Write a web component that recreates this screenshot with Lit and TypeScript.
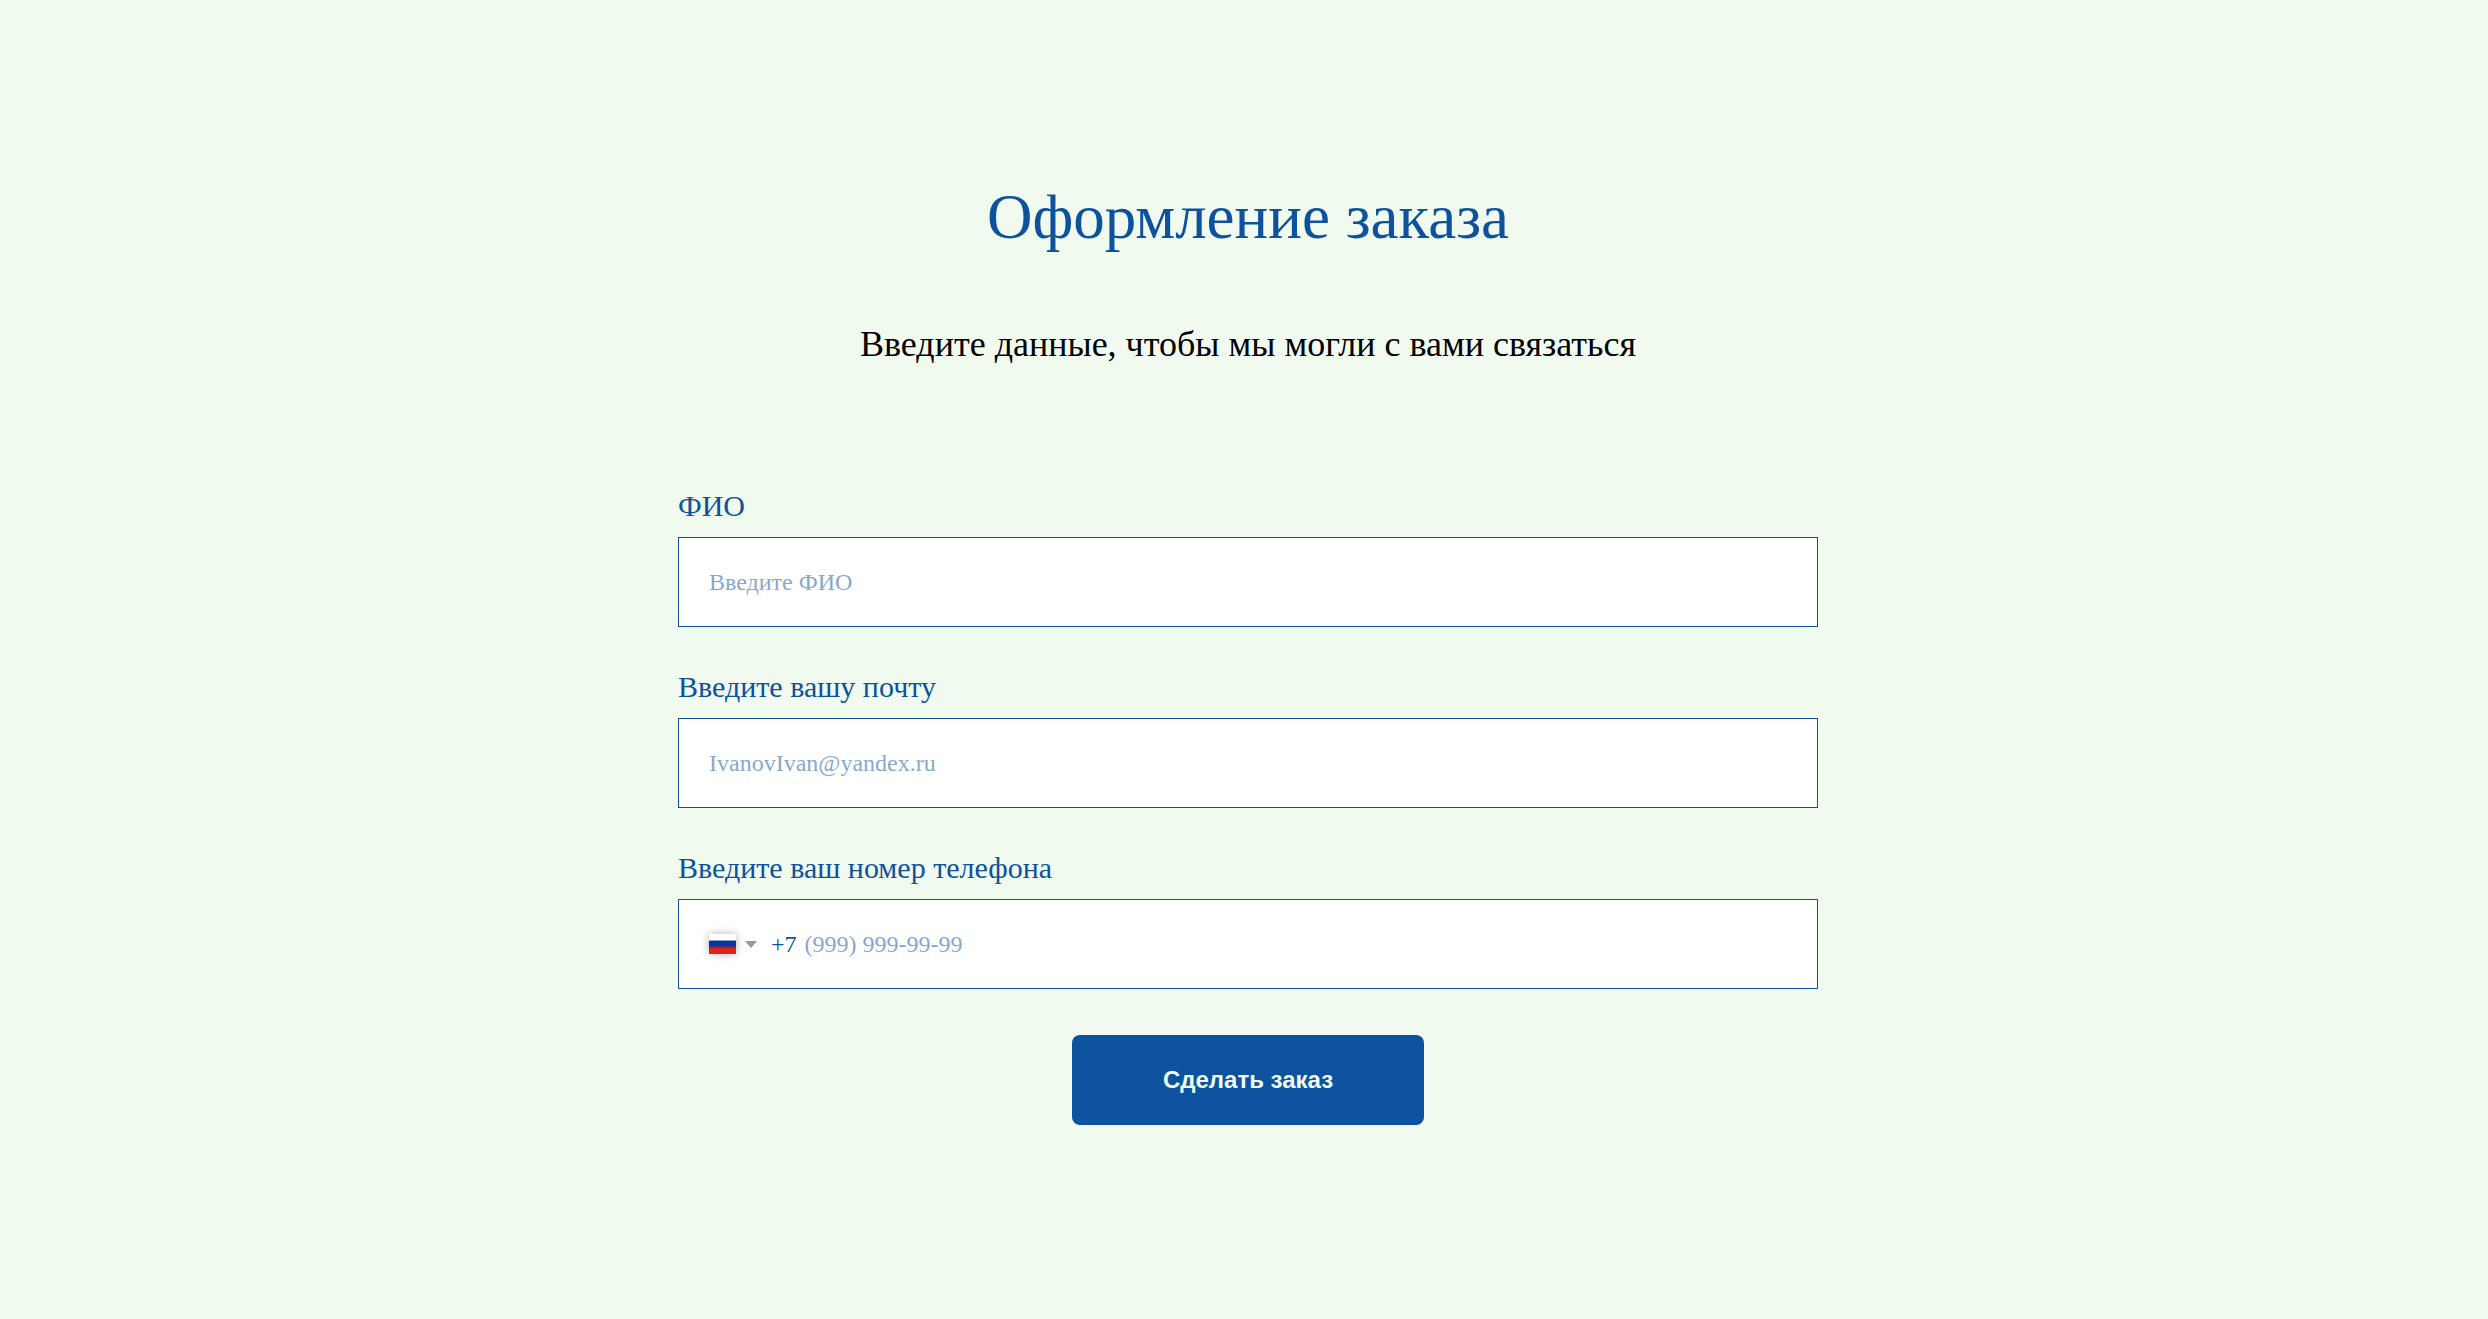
import { LitElement, html, css, svg } from "lit";
import { customElement } from "lit/decorators.js";

const flag = svg`
  <rect width="27" height="20" fill="#ffffff"/>
  <rect y="6" width="27" height="2" fill="#8aa0d8"/>
  <rect y="7" width="27" height="6" fill="#0036a7"/>
  <rect y="12" width="27" height="2" fill="#6b2c63"/>
  <rect y="14" width="27" height="6" fill="#d8271a"/>`;

@customElement("app-root")
export class AppRoot extends LitElement {
  static styles = css`
    :host {
      display: block;
      min-height: 100vh;
      box-sizing: border-box;
      padding: 178px 20px 120px 28px;
      background: #f0faee;
      color: #0d529e;
      font-family: "Liberation Serif", "Times New Roman", serif;
    }
    .title,
    .subtitle {
      margin: 0;
      text-align: center;
      font-weight: 400;
    }
    .title {
      font-size: 63px;
      line-height: 78px;
    }
    .subtitle {
      margin-top: 60px;
      font-size: 36px;
      line-height: 56px;
      color: #000;
    }
    .form {
      display: flex;
      flex-direction: column;
      gap: 37px;
      max-width: 1140px;
      margin: 111px auto 0;
    }
    .field {
      display: flex;
      flex-direction: column;
      gap: 8px;
    }
    .label {
      font-size: 30px;
      line-height: 46px;
    }
    .box {
      display: flex;
      align-items: center;
      height: 90px;
      box-sizing: border-box;
      padding: 0 30px;
      border: 1px solid #0d529e;
      background: #fff;
    }
    .input {
      flex: 1;
      min-width: 0;
      height: 100%;
      box-sizing: border-box;
      padding: 0;
      border: 0;
      outline: 0;
      background: none;
      color: inherit;
      font: 24px/36px "Liberation Serif", "Times New Roman", serif;
    }
    .input::placeholder {
      color: #0d529e;
      opacity: 0.5;
    }
    .box:focus-within {
      box-shadow: 0 0 0 2px #86a9cf;
    }
    .country {
      display: flex;
      align-items: center;
      gap: 9px;
      padding: 0;
      border: 0;
      background: none;
      cursor: pointer;
    }
    .flag {
      width: 27px;
      height: 20px;
      box-shadow: 0 0 8px rgba(0, 0, 0, 0.3);
    }
    .arrow {
      width: 12px;
      height: 7px;
    }
    .code {
      margin: 0 8px 0 14px;
      font-size: 24px;
      line-height: 36px;
    }
    .submit {
      align-self: center;
      width: 352px;
      max-width: 100%;
      height: 90px;
      margin-top: 9px;
      border: 0;
      border-radius: 8px;
      background: #0d529e;
      color: #f0faee;
      font: 700 24px/36px "Liberation Sans", Arial, sans-serif;
      cursor: pointer;
    }
  `;

  private send(event: Event) {
    event.preventDefault();
  }

  render() {
    return html`
      <main>
        <h1 class="title">Оформление заказа</h1>
        <p class="subtitle">Введите данные, чтобы мы могли с вами связаться</p>
        <form class="form" @submit=${this.send}>
          <div class="field">
            <label class="label" for="name">ФИО</label>
            <div class="box">
              <input class="input" id="name" type="text" placeholder="Введите ФИО" />
            </div>
          </div>
          <div class="field">
            <label class="label" for="email">Введите вашу почту</label>
            <div class="box">
              <input class="input" id="email" type="email" placeholder="IvanovIvan@yandex.ru" />
            </div>
          </div>
          <div class="field">
            <label class="label" for="phone">Введите ваш номер телефона</label>
            <div class="box">
              <button class="country" type="button" aria-labelledby="code">
                <svg class="flag" viewBox="0 0 27 20" aria-hidden="true">${flag}</svg>
                <svg class="arrow" viewBox="0 0 12 7" aria-hidden="true">
                  <path d="M0 0H12L6 7Z" fill="#999" />
                </svg>
              </button>
              <span class="code" id="code">+7</span>
              <input class="input" id="phone" type="tel" placeholder="(999) 999-99-99" />
            </div>
          </div>
          <button class="submit" type="submit">Сделать заказ</button>
        </form>
      </main>
    `;
  }
}
